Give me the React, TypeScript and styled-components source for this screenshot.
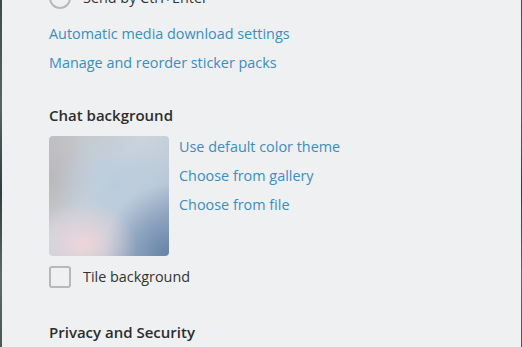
import React from 'react';
import styled, {createGlobalStyle} from 'styled-components';

const GlobalStyle = createGlobalStyle`
    html, body {
        margin: 0;
        padding: 0;
        background: #eef0f2;
        overflow: hidden;
    }
    body {
        font-family: "Open Sans", "Noto Sans", Arial, sans-serif;
        font-size: 14.4px;
        color: #333;
    }
`

const Frame = styled.div`
    display: flex;
    height: 347px;
    width: 522px;
`

const Edge = styled.div<{ $w: number }>`
    width: ${p => p.$w}px;
    flex-shrink: 0;
    background: linear-gradient(180deg, #3d4a4c 0%, #5a6466 30%, #2f3d40 55%, #5e6a6b 80%, #4a5658 100%);
`

const Content = styled.div`
    flex: 1;
    display: flex;
    flex-direction: column;
    padding-left: 47px;
    overflow: hidden;
`

const OptionRow = styled.div<{ $top: number }>`
    display: flex;
    align-items: center;
    gap: 12px;
    margin-top: ${p => p.$top}px;
    height: 22px;
`

const Radio = styled.span`
    width: 22px;
    height: 22px;
    box-sizing: border-box;
    border: 2px solid #b6b8ba;
    border-radius: 50%;
`

const Checkbox = styled.span`
    width: 22px;
    height: 22px;
    box-sizing: border-box;
    border: 2px solid #b6b8ba;
    border-radius: 3px;
`

const Label = styled.span`
    color: #333;
    line-height: 22px;
`

const LinkList = styled.div<{ $top: number }>`
    display: flex;
    flex-direction: column;
    align-items: flex-start;
    margin-top: ${p => p.$top}px;
`

const Link = styled.a`
    color: #3a8ec0;
    line-height: 29px;
    text-decoration: none;
    cursor: pointer;
`

const SectionTitle = styled.div<{ $top: number }>`
    font-weight: 600;
    font-size: 15px;
    color: #2d2d2d;
    line-height: 20px;
    margin-top: ${p => p.$top}px;
`

const BackgroundRow = styled.div`
    display: flex;
    gap: 10px;
    margin-top: 11px;
`

const Preview = styled.div`
    width: 120px;
    height: 120px;
    border-radius: 4px;
    flex-shrink: 0;
    background:
        radial-gradient(ellipse 45% 35% at 28% 90%, rgba(238, 214, 218, 1) 0%, rgba(234, 212, 218, 0) 100%),
        radial-gradient(ellipse 55% 60% at 100% 100%, rgba(102, 130, 166, 1) 0%, rgba(118, 144, 178, 0.7) 40%, rgba(150, 170, 196, 0) 100%),
        radial-gradient(ellipse 50% 45% at 55% 40%, rgba(186, 204, 220, 1) 0%, rgba(186, 204, 220, 0) 100%),
        radial-gradient(ellipse 40% 50% at 0% 35%, rgba(186, 184, 188, 1) 0%, rgba(186, 184, 188, 0) 100%),
        linear-gradient(135deg, #c2c2c6 0%, #ccd4dc 40%, #bccad8 65%, #90a6c0 100%);
`

const SideLinks = styled(LinkList)``

export default function App() {
    return (
        <Frame>
            <GlobalStyle/>
            <Edge $w={2}/>
            <Content>
                <OptionRow $top={-13}>
                    <Radio/>
                    <Label>Send by Ctrl+Enter</Label>
                </OptionRow>
                <LinkList $top={10}>
                    <Link>Automatic media download settings</Link>
                    <Link>Manage and reorder sticker packs</Link>
                </LinkList>
                <SectionTitle $top={28}>Chat background</SectionTitle>
                <BackgroundRow>
                    <Preview/>
                    <SideLinks $top={-4}>
                        <Link>Use default color theme</Link>
                        <Link>Choose from gallery</Link>
                        <Link>Choose from file</Link>
                    </SideLinks>
                </BackgroundRow>
                <OptionRow $top={10}>
                    <Checkbox/>
                    <Label>Tile background</Label>
                </OptionRow>
                <SectionTitle $top={34}>Privacy and Security</SectionTitle>
            </Content>
            <Edge $w={1}/>
        </Frame>
    );
}
